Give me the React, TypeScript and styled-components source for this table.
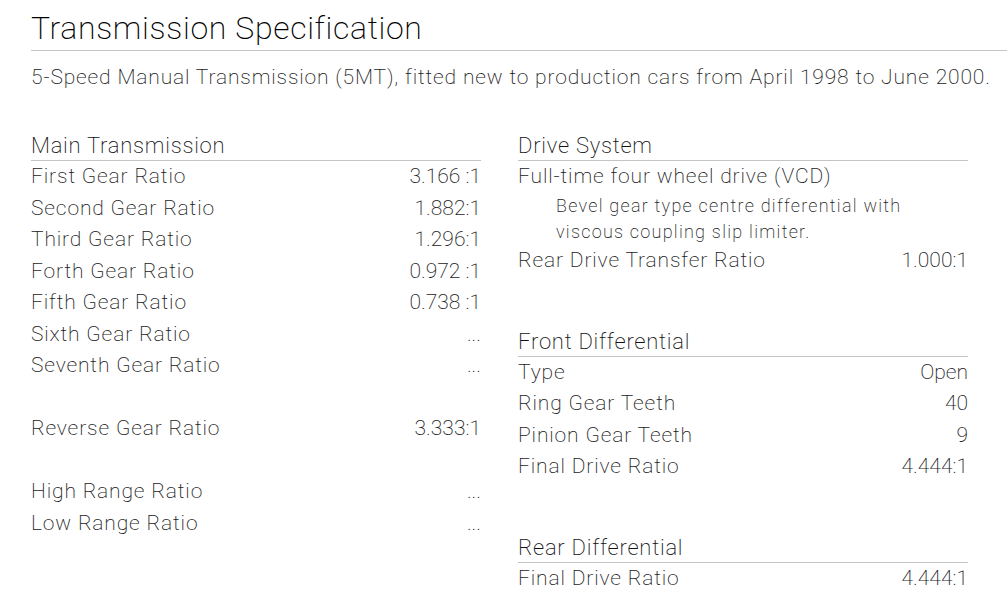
import React from "react";
import styled, { createGlobalStyle } from "styled-components";

const Global = createGlobalStyle`
  html, body { margin: 0; padding: 0; background: #fff; }
  body { font-family: Roboto, "Liberation Sans", sans-serif; font-weight: 200; color: #1a1a1a; }
`;

const Page = styled.div`
  padding: 7px 0 0 31px;
  overflow: hidden;
  width: 976px;
`;

const Title = styled.h1`
  margin: 0;
  font-size: 32px;
  font-weight: 200;
  letter-spacing: 0.65px;
  line-height: 42px;
  color: #000;
  padding-bottom: 1px;
  border-bottom: 1px solid #c4c4c4;
`;

const Subtitle = styled.p`
  margin: 12px 0 0 0;
  font-size: 21px;
  letter-spacing: 0.84px;
  line-height: 28px;
  color: #1a1a1a;
`;

const Columns = styled.div`
  display: grid;
  grid-template-columns: 450px 450px;
  column-gap: 37px;
  margin-top: 41px;
`;

const Column = styled.div`
  display: flex;
  flex-direction: column;
`;

const Section = styled.section<{ $gapBefore?: number }>`
  margin-top: ${(p) => p.$gapBefore ?? 0}px;
`;

const Heading = styled.h2`
  margin: 0;
  font-size: 22px;
  font-weight: 200;
  letter-spacing: 0.75px;
  line-height: 28px;
  color: #111;
  border-bottom: 1px solid #c4c4c4;
`;

const Row = styled.div<{ $gapBefore?: number }>`
  display: flex;
  justify-content: space-between;
  font-size: 21px;
  letter-spacing: 0.85px;
  line-height: 31.5px;
  margin-top: ${(p) => p.$gapBefore ?? 0}px;
`;

const Value = styled.span`
  letter-spacing: 0;
`;

const Note = styled.div`
  padding-left: 38px;
  font-size: 18px;
  letter-spacing: 1.25px;
  line-height: 26px;
`;

export default function App() {
  return (
    <>
      <Global />
      <Page>
        <Title>Transmission Specification</Title>
        <Subtitle>
          5-Speed Manual Transmission (5MT), fitted new to production cars from April 1998 to June 2000.
        </Subtitle>
        <Columns>
          <Column>
            <Section>
              <Heading>Main Transmission</Heading>
              <Row><span>First Gear Ratio</span><Value>3.166 :1</Value></Row>
              <Row><span>Second Gear Ratio</span><Value>1.882:1</Value></Row>
              <Row><span>Third Gear Ratio</span><Value>1.296:1</Value></Row>
              <Row><span>Forth Gear Ratio</span><Value>0.972 :1</Value></Row>
              <Row><span>Fifth Gear Ratio</span><Value>0.738 :1</Value></Row>
              <Row><span>Sixth Gear Ratio</span><Value>...</Value></Row>
              <Row><span>Seventh Gear Ratio</span><Value>...</Value></Row>
              <Row $gapBefore={31.5}><span>Reverse Gear Ratio</span><Value>3.333:1</Value></Row>
              <Row $gapBefore={31.5}><span>High Range Ratio</span><Value>...</Value></Row>
              <Row><span>Low Range Ratio</span><Value>...</Value></Row>
            </Section>
          </Column>
          <Column>
            <Section>
              <Heading>Drive System</Heading>
              <Row><span>Full-time four wheel drive (VCD)</span></Row>
              <Note>
                Bevel gear type centre differential with
                <br />
                viscous coupling slip limiter.
              </Note>
              <Row><span>Rear Drive Transfer Ratio</span><Value>1.000:1</Value></Row>
            </Section>
            <Section $gapBefore={51.5}>
              <Heading>Front Differential</Heading>
              <Row><span>Type</span><Value>Open</Value></Row>
              <Row><span>Ring Gear Teeth</span><Value>40</Value></Row>
              <Row><span>Pinion Gear Teeth</span><Value>9</Value></Row>
              <Row><span>Final Drive Ratio</span><Value>4.444:1</Value></Row>
            </Section>
            <Section $gapBefore={51}>
              <Heading>Rear Differential</Heading>
              <Row><span>Final Drive Ratio</span><Value>4.444:1</Value></Row>
            </Section>
          </Column>
        </Columns>
      </Page>
    </>
  );
}
